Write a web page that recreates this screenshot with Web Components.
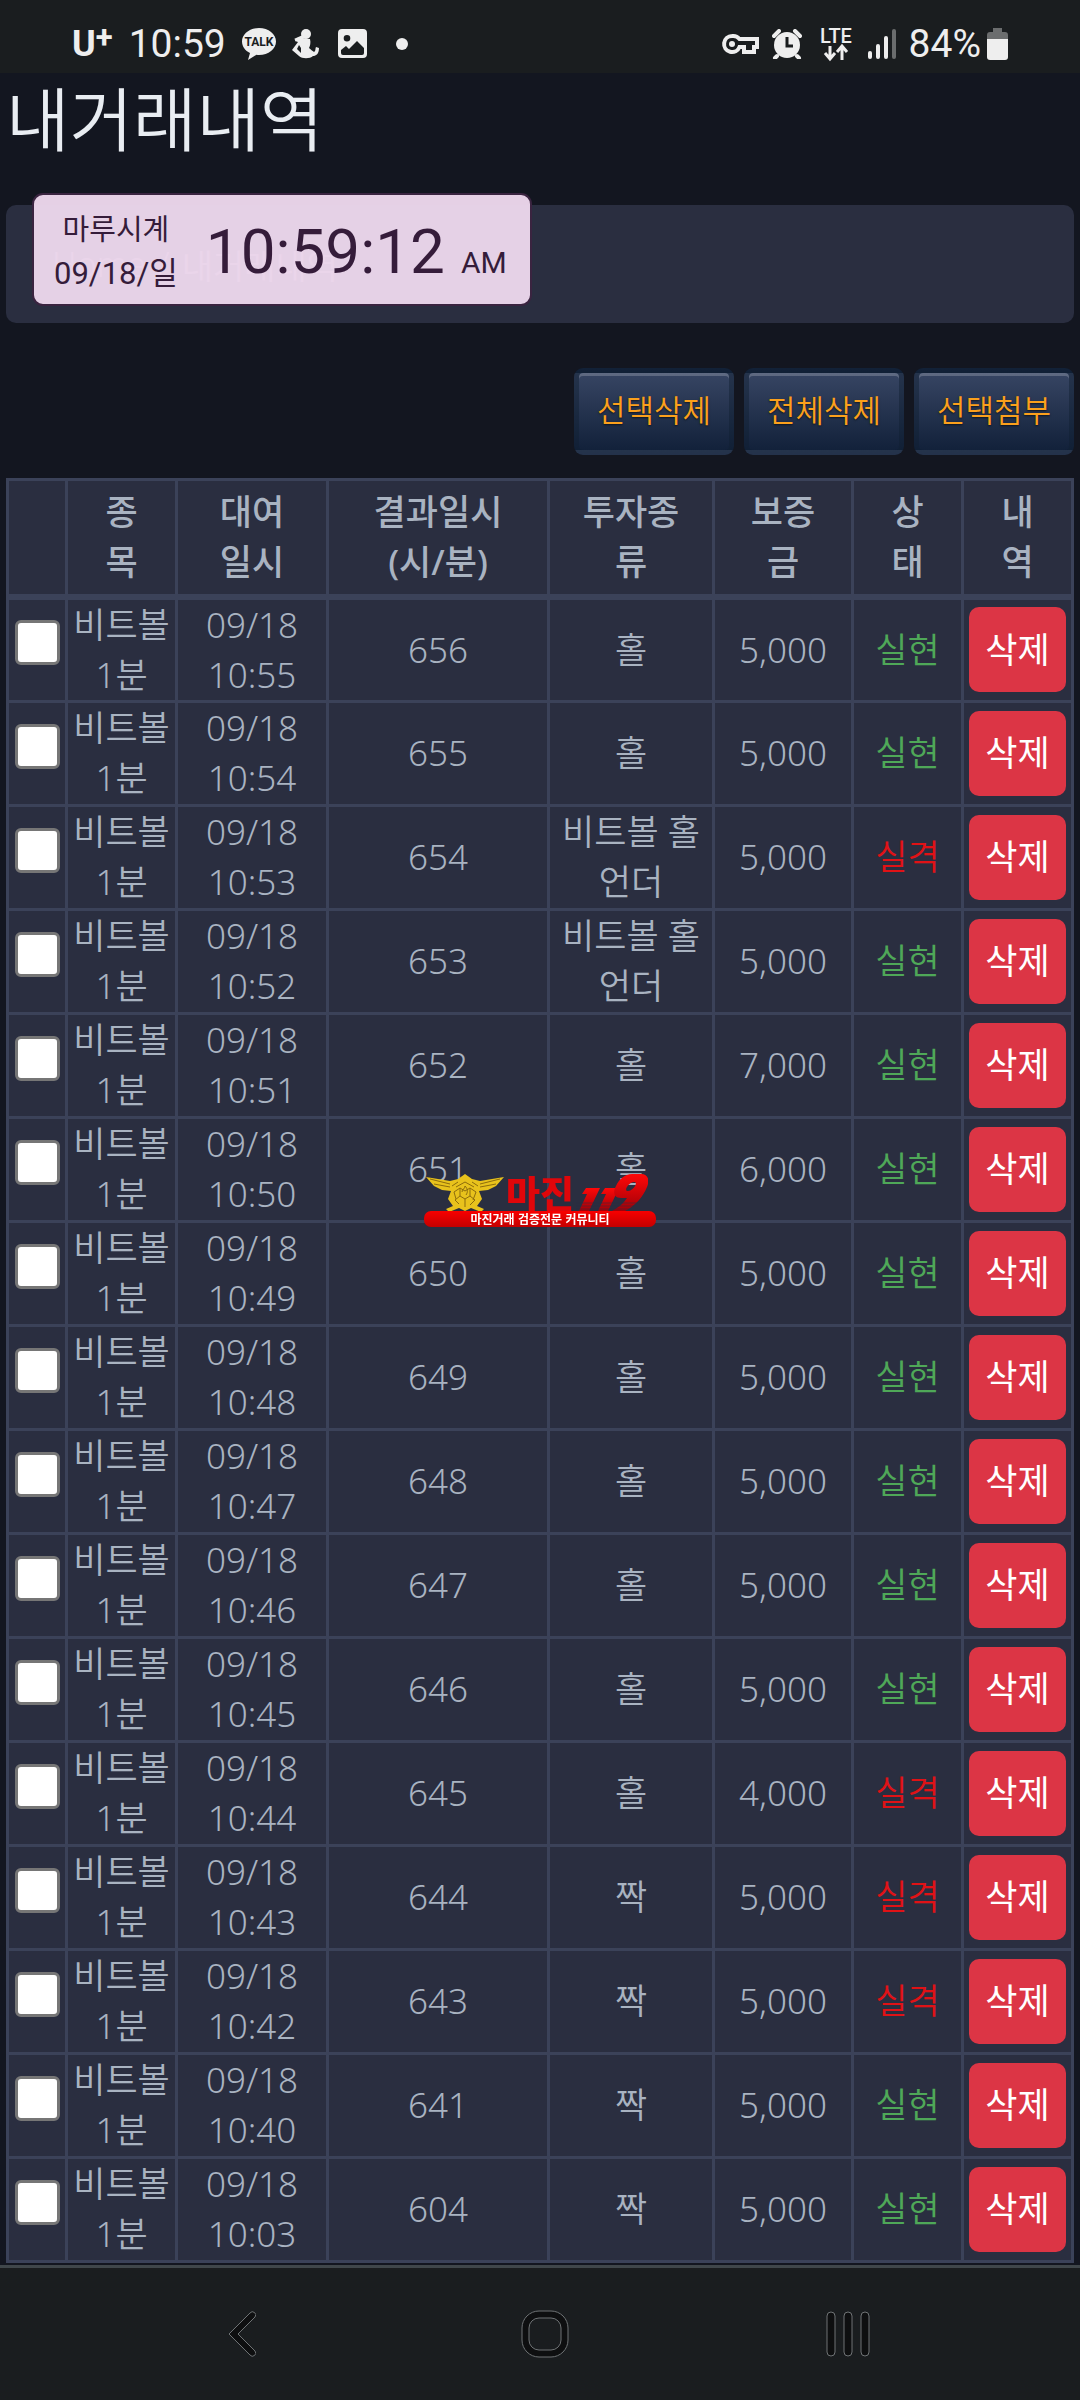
<!DOCTYPE html>
<html lang="ko">
<head>
  <meta charset="UTF-8">
  <meta name="viewport" content="width=device-width, initial-scale=1.0">
  <title>내거래내역</title>
  <style>
    :root {
      --page: #131620;
      --panel: #2a2e40;
      --line: #3b4259;
      --text: #a9b3c1;
      --bar: #1a1d1f;
      --icon: #eeeeee;
      --system-font: Roboto, "Noto Sans CJK KR", sans-serif;
    }
    body {
      margin: 0;
      min-height: 100vh;
      display: flex;
      flex-direction: column;
      background-color: var(--page);
      color: var(--text);
      font-family: "Noto Sans", "Noto Sans CJK KR", sans-serif;
      font-weight: 350;
    }
    main {
      flex: 1;
      padding: 0 6px;
    }
    .actions {
      display: flex;
      justify-content: flex-end;
      gap: 10px;
      margin: 45px 0 23px;
    }
  </style>
</head>
<body>
  <status-bar></status-bar>
  <main>
    <page-header current="내거래내역"></page-header>
    <div class="actions">
      <action-button>선택삭제</action-button>
      <action-button>전체삭제</action-button>
      <action-button>선택첨부</action-button>
    </div>
    <trade-table></trade-table>
  </main>
  <navigation-bar></navigation-bar>
  <floating-clock time="10:59:12" period="AM">
    <span slot="name">마루시계</span>
    <span slot="date">09/18/일</span>
  </floating-clock>
  <site-watermark></site-watermark>

  <script>
    class StatusBar extends HTMLElement {
      constructor () {
        super()
        this.shadow = this.attachShadow({ mode: 'open' })
      }

      connectedCallback () {
        this.render()
      }

      render () {
        this.shadow.innerHTML =
          /* html */`
          <style>
            :host {
              display: flex;
              justify-content: space-between;
              align-items: center;
              height: 58px;
              padding: 15px 72px 0 72px;
              background-color: var(--bar);
              color: var(--icon);
              font-family: var(--system-font);
              font-weight: 400;
            }
            .group {
              display: flex;
              align-items: center;
            }
            .left {
              gap: 16px;
            }
            .right {
              gap: 13px;
            }
            .carrier {
              font-size: 36px;
              font-weight: 700;
              line-height: 40px;
            }
            sup {
              font-size: 31px;
              line-height: 0;
              vertical-align: 8px;
            }
            .time, .percent {
              font-size: 39px;
              line-height: 40px;
            }
            .power {
              display: flex;
              align-items: center;
              gap: 6px;
            }
            svg {
              display: block;
              fill: var(--icon);
            }
            .talk text {
              fill: var(--bar);
              font: 700 12px Roboto, sans-serif;
            }
            .lte {
              overflow: visible;
            }
            .lte text {
              font: 500 20px Roboto, sans-serif;
            }
          </style>
          <div class="group left">
            <span class="carrier">U<sup>+</sup></span>
            <span class="time">10:59</span>
            <svg class="talk" width="34" height="34" viewBox="0 0 34 34">
              <path d="M17 1C7.500 1 0 7 0 14.500c0 5 3.200 9.200 8 11.600L6 33l8.500-5.200c.8.1 1.700.2 2.500.2 9.500 0 17-6 17-13.500S26.500 1 17 1z"/>
              <text x="17" y="19" text-anchor="middle">TALK</text>
            </svg>
            <svg width="27" height="30" viewBox="0 0 27 30">
              <circle cx="14" cy="5" r="5"/>
              <path d="M11 9l7 1c1 4 0 7-1 9 2 2 4 3 5 4 2-1 1-3 2-5l3 1c0 6-3 8-6 8-3 3-11 3-14 0L0 21l6-8-3-1 2-3 6-1zM5 20l4 4v-5l-2-3z" fill-rule="evenodd"/>
              <path d="M3 11l9-4" stroke="#eee" stroke-width="3"/>
            </svg>
            <svg width="34" height="30" viewBox="0 0 34 30">
              <path d="M7 0h21a4 4 0 0 1 4 4v21a4 4 0 0 1-4 4H7a4 4 0 0 1-4-4V4a4 4 0 0 1 4-4zM12 6a3.300 3.300 0 1 0 0 6.600A3.300 3.300 0 1 0 12 6zM6 21v3a2 2 0 0 0 2 2h19a2 2 0 0 0 2-2v-5l-7-7-8 8-3-3z" fill-rule="evenodd"/>
            </svg>
            <svg width="34" height="14" viewBox="0 0 34 14">
              <circle cx="17" cy="7" r="6"/>
            </svg>
          </div>
          <div class="group right">
            <svg width="38" height="24" viewBox="0 0 38 24">
              <path d="M11 4a8 8 0 1 0 7.500 11H23v5h10v-5h3V7H18.500A8 8 0 0 0 11 4z" fill="none" stroke="#eee" stroke-width="4"/>
              <circle cx="11" cy="12" r="3"/>
              <path d="M22 9h10v2H22zM26 13h4v5h-4z" fill="#1a1d1f"/>
            </svg>
            <svg width="30" height="30" viewBox="0 0 30 30">
              <circle cx="15" cy="16" r="13"/>
              <path d="M2 7l5-5M28 7l-5-5M5 27l-2 2M25 27l2 2" stroke="#eee" stroke-width="4" stroke-linecap="round"/>
              <path d="M15 8v9h6" fill="none" stroke="#1a1d1f" stroke-width="3"/>
            </svg>
            <svg class="lte" width="40" height="34" viewBox="0 0 40 34">
              <text x="21" y="16" text-anchor="middle">LTE</text>
              <path d="M15 19v12M10 26l5 6 5-6M27 33V20M22 25l5-6 5 6" fill="none" stroke="#eee" stroke-width="3"/>
            </svg>
            <svg width="28" height="30" viewBox="0 0 28 30">
              <rect x="0" y="22" width="4" height="8" rx="2"/>
              <rect x="8" y="15" width="4" height="15" rx="2"/>
              <rect x="16" y="7" width="4" height="23" rx="2"/>
              <rect x="24" y="0" width="4" height="30" rx="2" fill="#6b6d6e"/>
            </svg>
            <span class="power">
              <span class="percent">84%</span>
              <svg width="21" height="32" viewBox="0 0 21 32">
                <path d="M6 0h9v4h3a3 3 0 0 1 3 3v4H0V7a3 3 0 0 1 3-3h3z" fill="#6b6d6e"/>
                <path d="M0 11h21v18a3 3 0 0 1-3 3H3a3 3 0 0 1-3-3z"/>
              </svg>
            </span>
          </div>
          `
      }
    }

    customElements.define('status-bar', StatusBar)

    class PageHeader extends HTMLElement {
      constructor () {
        super()
        this.shadow = this.attachShadow({ mode: 'open' })
      }

      connectedCallback () {
        this.render()
      }

      render () {
        const current = this.getAttribute('current')
        this.shadow.innerHTML =
          /* html */`
          <style>
            :host {
              display: block;
            }
            h1 {
              margin: 0 0 40px;
              padding: 4px 0;
              color: #e9edf2;
              font-size: 69px;
              font-weight: inherit;
              line-height: 84px;
            }
            nav {
              display: flex;
              align-items: center;
              gap: 12px;
              height: 118px;
              padding: 0 46px;
              border-radius: 10px;
              background-color: var(--panel);
              color: #e9edf2;
              font-size: 34px;
            }
            a {
              color: inherit;
              text-decoration: none;
            }
          </style>
          <h1>${current}</h1>
          <nav>
            <a href="#">Home</a>
            <span>/</span>
            <span>${current}</span>
          </nav>
          `
      }
    }

    customElements.define('page-header', PageHeader)

    class ActionButton extends HTMLElement {
      constructor () {
        super()
        this.shadow = this.attachShadow({ mode: 'open' })
      }

      connectedCallback () {
        this.render()
      }

      render () {
        this.shadow.innerHTML =
          /* html */`
          <style>
            :host {
              display: block;
            }
            /* the gradient repeats under the translucent border */
            button {
              display: block;
              min-width: 160px;
              height: 87px;
              padding: 0 16px 4px;
              border: 5px solid rgba(16, 32, 48, 0.45);
              border-radius: 9px;
              background: linear-gradient(#374563, #12213a);
              box-shadow: inset 0 3px 0 rgba(255, 255, 255, 0.2);
              color: #fba01c;
              font: inherit;
              font-size: 31px;
              line-height: 50px;
              text-shadow: 0 1px 2px rgba(0, 0, 0, 0.6);
              cursor: pointer;
            }
            button:hover {
              filter: brightness(1.1);
            }
          </style>
          <button type="button"><slot></slot></button>
          `
      }
    }

    customElements.define('action-button', ActionButton)

    class DeleteButton extends HTMLElement {
      constructor () {
        super()
        this.shadow = this.attachShadow({ mode: 'open' })
      }

      connectedCallback () {
        this.render()
      }

      render () {
        this.shadow.innerHTML =
          /* html */`
          <style>
            :host {
              display: block;
            }
            button {
              display: block;
              width: 100%;
              height: 85px;
              padding: 0;
              border: none;
              border-radius: 10px;
              background-color: #dc3545;
              color: #ffffff;
              font: inherit;
              font-weight: 400;
              cursor: pointer;
            }
            button:hover {
              filter: brightness(1.1);
            }
          </style>
          <button type="button"><slot></slot></button>
          `
      }
    }

    customElements.define('delete-button', DeleteButton)

    class TradeTable extends HTMLElement {
      constructor () {
        super()
        this.shadow = this.attachShadow({ mode: 'open' })
      }

      connectedCallback () {
        this.trades = [
          { time: '10:55', round: 656, type: '홀', deposit: 5000, won: true },
          { time: '10:54', round: 655, type: '홀', deposit: 5000, won: true },
          { time: '10:53', round: 654, type: '비트볼 홀언더', deposit: 5000, won: false },
          { time: '10:52', round: 653, type: '비트볼 홀언더', deposit: 5000, won: true },
          { time: '10:51', round: 652, type: '홀', deposit: 7000, won: true },
          { time: '10:50', round: 651, type: '홀', deposit: 6000, won: true },
          { time: '10:49', round: 650, type: '홀', deposit: 5000, won: true },
          { time: '10:48', round: 649, type: '홀', deposit: 5000, won: true },
          { time: '10:47', round: 648, type: '홀', deposit: 5000, won: true },
          { time: '10:46', round: 647, type: '홀', deposit: 5000, won: true },
          { time: '10:45', round: 646, type: '홀', deposit: 5000, won: true },
          { time: '10:44', round: 645, type: '홀', deposit: 4000, won: false },
          { time: '10:43', round: 644, type: '짝', deposit: 5000, won: false },
          { time: '10:42', round: 643, type: '짝', deposit: 5000, won: false },
          { time: '10:40', round: 641, type: '짝', deposit: 5000, won: true },
          { time: '10:03', round: 604, type: '짝', deposit: 5000, won: true }
        ]
        this.render()
      }

      render () {
        this.shadow.innerHTML =
          /* html */`
          <style>
            :host {
              display: block;
            }
            table {
              width: 100%;
              table-layout: fixed;
              border-collapse: collapse;
              background-color: var(--panel);
              font-size: 35px;
              line-height: 50px;
              text-align: center;
            }
            th, td {
              box-sizing: border-box;
              border: 3px solid var(--line);
            }
            th {
              height: 117px;
              padding: 0 22px;
              border-bottom-width: 6px;
              font-weight: 500;
            }
            td {
              height: 104px;
              padding: 0 5px;
            }
            .check { width: 59px; }
            .item { width: 110px; }
            .lent { width: 151px; }
            .type { width: 165px; }
            .deposit { width: 139px; }
            .state { width: 110px; }
            .detail { width: 110px; }
            td.pick {
              padding-bottom: 14px;
            }
            input {
              appearance: none;
              display: block;
              width: 45px;
              height: 45px;
              margin: 0 auto;
              border: 3px solid #767676;
              border-radius: 6px;
              background-color: #ffffff;
            }
            input:checked {
              background-color: #0075ff;
            }
            .won { color: #4fa858; }
            .lost { color: #e01216; }
          </style>
          <table>
            <colgroup>
              <col class="check"><col class="item"><col class="lent"><col>
              <col class="type"><col class="deposit"><col class="state"><col class="detail">
            </colgroup>
            <thead>
              <tr>
                <th></th>
                <th scope="col">종목</th>
                <th scope="col">대여 일시</th>
                <th scope="col">결과일시 (시/분)</th>
                <th scope="col">투자종류</th>
                <th scope="col">보증금</th>
                <th scope="col">상태</th>
                <th scope="col">내역</th>
              </tr>
            </thead>
            <tbody>${this.trades.map(trade => this.row(trade)).join('')}</tbody>
          </table>
          `
      }

      row (trade) {
        return /* html */`
          <tr>
            <td class="pick"><input type="checkbox" aria-label="${trade.round} 선택"></td>
            <td>비트볼 1분</td>
            <td>09/18 ${trade.time}</td>
            <td>${trade.round}</td>
            <td>${trade.type}</td>
            <td>${trade.deposit.toLocaleString('en-US')}</td>
            <td class="${trade.won ? 'won' : 'lost'}">${trade.won ? '실현' : '실격'}</td>
            <td><delete-button>삭제</delete-button></td>
          </tr>
          `
      }
    }

    customElements.define('trade-table', TradeTable)

    class FloatingClock extends HTMLElement {
      constructor () {
        super()
        this.shadow = this.attachShadow({ mode: 'open' })
      }

      connectedCallback () {
        this.render()
      }

      render () {
        this.shadow.innerHTML =
          /* html */`
          <style>
            :host {
              position: absolute;
              top: 193px;
              left: 32px;
              display: flex;
              align-items: center;
              box-sizing: border-box;
              width: 500px;
              height: 113px;
              padding: 4px 20px 0;
              gap: 28px;
              border: 2px solid #3a2440;
              border-radius: 11px;
              background-color: rgba(234, 212, 234, 0.98);
              color: #351c3a;
              font-family: var(--system-font);
              font-weight: 400;
              white-space: nowrap;
            }
            .label {
              display: flex;
              flex-direction: column;
              align-items: center;
              font-size: 29px;
              line-height: 44px;
            }
            .date {
              font-size: 31px;
            }
            .time {
              font-size: 62px;
              line-height: 64px;
            }
            .clock {
              display: flex;
              align-items: baseline;
              gap: 16px;
            }
            .period {
              font-size: 30px;
            }
          </style>
          <div class="label">
            <slot name="name"></slot>
            <span class="date"><slot name="date"></slot></span>
          </div>
          <div class="clock">
            <span class="time">${this.getAttribute('time')}</span>
            <span class="period">${this.getAttribute('period')}</span>
          </div>
          `
      }
    }

    customElements.define('floating-clock', FloatingClock)

    class SiteWatermark extends HTMLElement {
      constructor () {
        super()
        this.shadow = this.attachShadow({ mode: 'open' })
      }

      connectedCallback () {
        this.render()
      }

      render () {
        this.shadow.innerHTML =
          /* html */`
          <style>
            :host {
              position: fixed;
              inset: 0;
              display: grid;
              place-content: center;
              pointer-events: none;
              font-family: "Noto Sans CJK KR", sans-serif;
            }
            .brand {
              display: flex;
              align-items: flex-end;
              gap: 2px;
              height: 37px;
              padding-left: 2px;
            }
            svg {
              display: block;
            }
            .name {
              color: #e0060a;
              font-size: 37px;
              font-weight: 900;
              line-height: 37px;
            }
            .number {
              fill: url(#red);
            }
            .slogan {
              width: 232px;
              border-radius: 7px;
              background: linear-gradient(#f80000, #c40000);
              color: #ffffff;
              font-size: 12px;
              font-weight: 700;
              line-height: 16px;
              text-align: center;
            }
          </style>
          <div class="brand">
            <svg width="78" height="37" viewBox="0 0 78 37">
              <path d="M0 3l24 4 8-2 7-5 7 5 8 2 24-4-8 9-8 4-9 1 3 8-5 7 7 3-3 3-10-4-6 3-6-3-10 4-3-3 7-3-5-7 3-8-9-1-8-4z" fill="#e8c21c"/>
              <path d="M4 5l20 5M8 10l16 3M74 5l-20 5M70 10l-16 3M26 12l6-4M52 12l-6-4M30 13l9-5 9 5M28 18l6-4 5 3 5-3 6 4M30 25l-2-7M50 18l-3 8M33 30l-4-4 5-4 5 3 5-3 5 4-5 5M34 14v8M44 14v8M39 25v8M36 18c0-3 3-3 3-6 3 3 3 6 1 9" fill="none" stroke="#8d6c0c" stroke-width="1"/>
            </svg>
            <span class="name">마진</span>
            <svg class="number" width="72" height="37" viewBox="0 0 72 37" role="img" aria-label="119">
              <defs>
                <linearGradient id="red" x1="0" y1="0" x2="0" y2="1">
                  <stop offset="0" stop-color="#ff0808"/>
                  <stop offset="1" stop-color="#a00008"/>
                </linearGradient>
              </defs>
              <path d="M10 14h14L13 37H3l8-17H6zM29 14h14L32 37H22l8-17h-5z"/>
              <path d="M56 0h9c7 0 9 6 6 13-4 10-12 19-22 24H36c7-4 12-8 15-13h-6c-8 0-8-7-5-12C43 5 49 0 56 0zM58 8c-5 0-11 9-6 9s11-9 6-9z" fill-rule="evenodd"/>
              <path d="M0 29h62M0 32h58M0 35h54" stroke="#2a2e40" stroke-width="1" opacity="0.5"/>
            </svg>
          </div>
          <div class="slogan">마진거래 검증전문 커뮤니티</div>
          `
      }
    }

    customElements.define('site-watermark', SiteWatermark)

    class NavigationBar extends HTMLElement {
      constructor () {
        super()
        this.shadow = this.attachShadow({ mode: 'open' })
      }

      connectedCallback () {
        this.render()
      }

      render () {
        this.shadow.innerHTML =
          /* html */`
          <style>
            :host {
              display: flex;
              height: 132px;
              padding: 0 81px 0 90px;
              border-top: 3px solid #40474b;
              background-color: var(--bar);
            }
            button {
              flex: 1;
              display: grid;
              place-items: center;
              padding: 0;
              border: none;
              background: none;
              cursor: pointer;
            }
            svg {
              fill: #0e0f10;
              stroke: #6f7375;
            }
          </style>
          <button type="button" aria-label="뒤로">
            <svg width="28" height="46" viewBox="0 0 28 46">
              <path d="M1 23L22 2a3 3 0 0 1 5 4L10 23l17 17a3 3 0 0 1-5 4z"/>
            </svg>
          </button>
          <button type="button" aria-label="홈">
            <svg width="48" height="48" viewBox="0 0 48 48">
              <path d="M18 1h12a17 17 0 0 1 17 17v12a17 17 0 0 1-17 17H18A17 17 0 0 1 1 30V18A17 17 0 0 1 18 1zM18 8A10 10 0 0 0 8 18v12a10 10 0 0 0 10 10h12a10 10 0 0 0 10-10V18A10 10 0 0 0 30 8z" fill-rule="evenodd"/>
            </svg>
          </button>
          <button type="button" aria-label="최근 앱">
            <svg width="44" height="46" viewBox="0 0 44 46">
              <rect x="1" y="1" width="8" height="44" rx="4"/>
              <rect x="18" y="1" width="8" height="44" rx="4"/>
              <rect x="35" y="1" width="8" height="44" rx="4"/>
            </svg>
          </button>
          `
      }
    }

    customElements.define('navigation-bar', NavigationBar)
  </script>
</body>
</html>
